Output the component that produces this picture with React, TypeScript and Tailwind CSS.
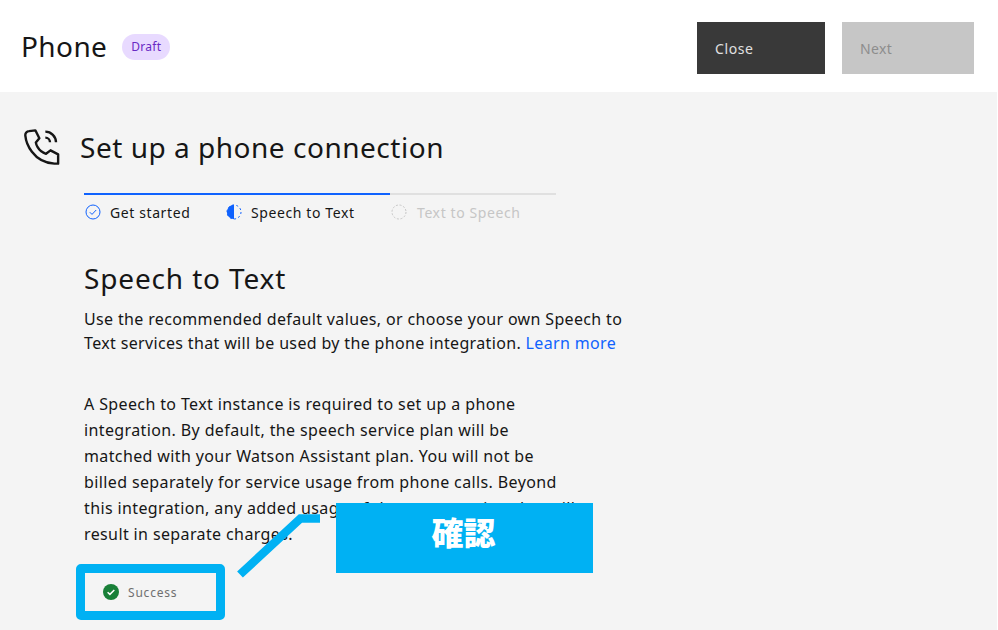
import type { ReactNode } from 'react';

const sans = 'font-["Noto_Sans","Roboto",sans-serif]';

function PhoneIcon() {
  return (
    <svg width="36" height="36" viewBox="3 3 27 27" fill="none" stroke="#161616" strokeWidth="1.8">
      <path d="M26 29h-.2C9.4 28 4.5 13.2 4 7.9A3 3 0 0 1 6.8 4.6l4.7-.6 3 6-2.6 3.2s1 6.4 7.6 8.4l3.4-2.6 5.7 3V29z" strokeLinejoin="round" />
      <path d="M19 5a8 8 0 0 1 8 8" />
      <path d="M19 9.5a3.5 3.5 0 0 1 3.5 3.5" />
    </svg>
  );
}

function DoneIcon() {
  return (
    <svg width="16" height="16" viewBox="0 0 16 16" fill="none" stroke="#0f62fe">
      <circle cx="8" cy="8" r="7" />
      <path d="M4.8 8.2l2.2 2.2 4.2-4.4" />
    </svg>
  );
}

function HalfIcon() {
  return (
    <svg width="16" height="16" viewBox="0 0 16 16" fill="none">
      <path d="M8 .8a7.2 7.2 0 0 0 0 14.4z" fill="#0f62fe" />
      <circle cx="8" cy="8" r="7" stroke="#0f62fe" strokeDasharray="2 2.4" />
    </svg>
  );
}

function EmptyIcon() {
  return (
    <svg width="16" height="16" viewBox="0 0 16 16" fill="none">
      <circle cx="8" cy="8" r="7" stroke="#c6c6c6" strokeDasharray="2 1.7" />
    </svg>
  );
}

function Step({ icon, children, className }: { icon: ReactNode; children: ReactNode; className: string }) {
  return (
    <div className={`flex items-center text-[14px] tracking-[0.6px] ${className}`}>
      {icon}
      <span>{children}</span>
    </div>
  );
}

export default function App() {
  return (
    <div className={`relative w-[998px] h-[630px] overflow-hidden bg-white text-[#161616] ${sans}`}>
      <header className="h-[92px] pl-[21px] pr-[24px] flex items-center justify-between">
        <div className="flex items-center gap-[15px]">
          <h1 className="text-[28px] leading-[36px] tracking-[0.4px]">Phone</h1>
          <span className="h-[26px] w-[48px] mt-[2px] rounded-full bg-[#e8daff] text-[#6929c4] text-[12px] tracking-[0.3px] flex items-center justify-center">Draft</span>
        </div>
        <div className="flex gap-[17px] mt-[4px]">
          <button className="w-[128px] h-[52px] pl-[18px] text-left text-[14px] tracking-[0.6px] text-[#e0e0e0] bg-[#393939]">Close</button>
          <button className="w-[132px] h-[52px] pl-[18px] text-left text-[14px] tracking-[0.4px] text-[#8d8d8d] bg-[#c6c6c6]">Next</button>
        </div>
      </header>

      <main className="h-[538px] mr-[1px] bg-[#f4f4f4] pl-[24px]">
        <div className="flex items-center gap-[20px] pt-[37px]">
          <PhoneIcon />
          <h2 className="text-[28px] leading-[36px] tracking-[0.52px]">Set up a phone connection</h2>
        </div>

        <div className="ml-[60px] mt-[28px]">
          <div className="w-[472px] flex">
            <div className="w-[306px] h-[2px] bg-[#0f62fe]" />
            <div className="w-[166px] h-[2px] bg-[#e0e0e0]" />
          </div>
          <div className="flex items-center mt-[8px] h-[18px]">
            <Step icon={<DoneIcon />} className="w-[142px] pl-[1px] gap-[9px]">Get started</Step>
            <Step icon={<HalfIcon />} className="w-[165px] gap-[9px]">Speech to Text</Step>
            <Step icon={<EmptyIcon />} className="gap-[10px] text-[#c6c6c6]">Text to Speech</Step>
          </div>

          <h3 className="text-[28px] leading-[36px] tracking-[0.85px] mt-[39px]">Speech to Text</h3>
          <p className="text-[16px] leading-[24px] tracking-[0.35px] w-[560px] mt-[11px]">
            Use the recommended default values, or choose your own Speech to Text services that will be used by the phone integration.{' '}
            <a className="text-[#0f62fe]">Learn more</a>
          </p>
          <p className="text-[16px] leading-[26px] tracking-[0.38px] w-[495px] mt-[36px]">
            A Speech to Text instance is required to set up a phone integration. By default, the speech service plan will be matched with your Watson Assistant plan. You will not be billed separately for service usage from phone calls. Beyond this integration, any added usage of the same service plan will result in separate charges.
          </p>
        </div>
      </main>

      {/* annotation overlay */}
      <div className="absolute left-[76px] top-[564px] w-[149px] h-[56px] rounded-[5px] border-[9px] border-[#00b1f3] flex items-center pl-[18px] gap-[9px] text-[12px] tracking-[0.8px] text-[#6f6f6f] bg-[#f4f4f4]">
        <svg width="16" height="16" viewBox="0 0 16 16">
          <circle cx="8" cy="8" r="8" fill="#198038" />
          <path d="M4.6 8.2l2.3 2.2 4.4-4.4" fill="none" stroke="#fff" strokeWidth="1.5" />
        </svg>
        <span className="pt-[1px]">Success</span>
      </div>
      <svg className="absolute left-[235px] top-[510px]" width="90" height="70" viewBox="0 0 90 70" fill="none">
        <path d="M5 64.5 L65.5 8.5 H85" stroke="#00b1f3" strokeWidth="8.5" />
      </svg>
      <div className="absolute left-[336px] top-[503px] w-[257px] h-[70px] pr-[2px] bg-[#00b1f3] text-white text-[32px] font-black font-['Noto_Sans_CJK_JP',sans-serif] flex justify-center pt-[7px] leading-[42px]">
        確認
      </div>
    </div>
  );
}
